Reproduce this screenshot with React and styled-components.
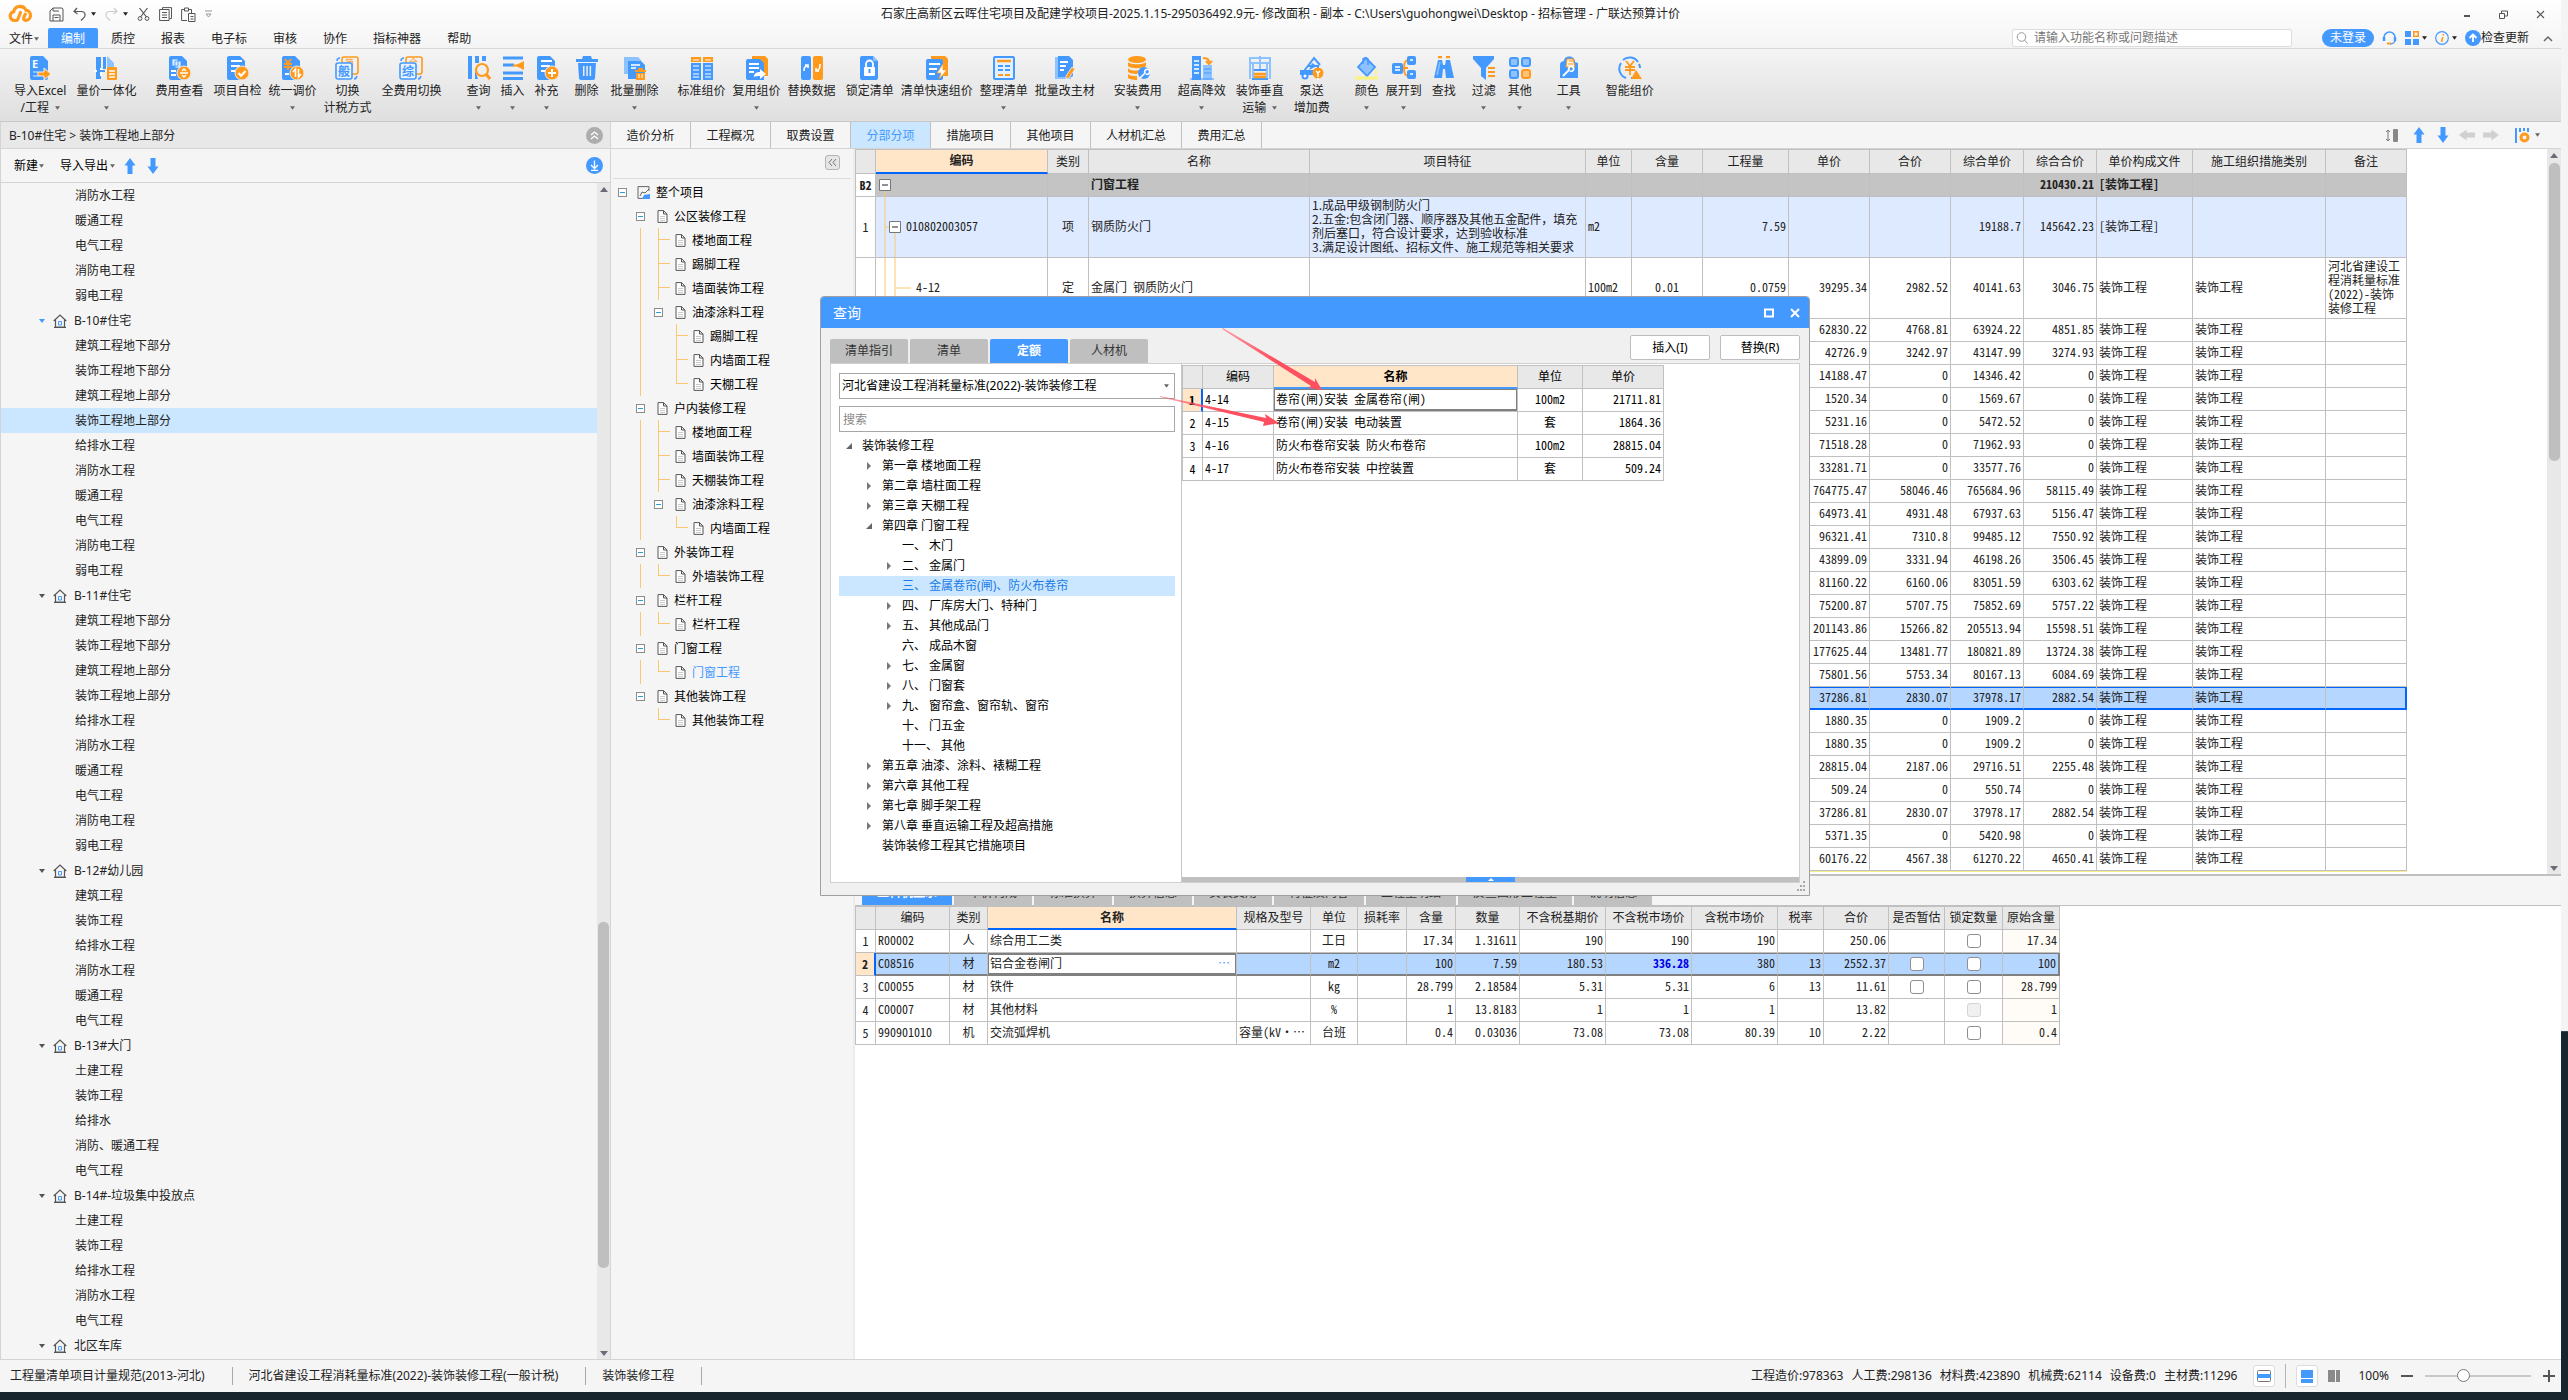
import React from "react";
import styled, { createGlobalStyle, css } from "styled-components";

const BLUE = "#4499ff";
const LIGHT = "#8cc2ff";
const ORANGE = "#ff9a1c";
const LINE = "#c0c0c0";

const GlobalStyle = createGlobalStyle`
  * {
    box-sizing: border-box;
  }
  body {
    margin: 0;
    background: #18252c;
    color: #222;
    font: 12px/16px "Noto Sans", "Noto Sans CJK SC", sans-serif;
  }
  button, input, select {
    font: inherit;
    color: inherit;
    margin: 0;
    padding: 0;
    border: 0;
    background: none;
  }
  svg {
    display: block;
    flex: none;
  }
`;

/* ---------- window frame ---------- */

const Desktop = styled.div`
  position: relative;
  display: grid;
  grid-template-columns: minmax(0, 1fr) 7px;
  height: 100vh;
  padding-bottom: 8px;
  overflow: hidden;
`;

const Strip = styled.div`
  height: 1032px;
  background: #f4f4f4;
  border-bottom: 1px solid #3b464c;
`;

const Window = styled.div`
  display: flex;
  flex-direction: column;
  min-height: 0;
  background: #f5f5f5;
`;

const Top = styled.header`
  background: linear-gradient(#ffffff, #f4f4f4);
  border-bottom: 1px solid #d8d8d8;
`;

const TitleBar = styled.div`
  display: grid;
  grid-template-columns: 1fr auto 1fr;
  align-items: center;
  height: 28px;
`;

const QuickTools = styled.div`
  display: flex;
  align-items: center;
  gap: 9px;
  padding-left: 8px;
`;

const IconButton = styled.button`
  display: flex;
  align-items: center;
  gap: ${(p) => p.$gap || 0}px;
  margin-left: ${(p) => p.$left || 0}px;
`;

const Title = styled.h1`
  margin: 0;
  font-size: 12px;
  font-weight: 400;
`;

const WindowButtons = styled.div`
  display: flex;
  justify-content: flex-end;
  align-items: center;
  gap: 28px;
  padding-right: 16px;
`;

const MenuBar = styled.nav`
  display: flex;
  align-items: center;
  height: 20px;
`;

const MenuItem = styled.button`
  display: flex;
  align-items: center;
  gap: 1px;
  height: 20px;
  padding: 2px ${(p) => (p.$first ? "9px" : "13px")} 0;
  ${(p) =>
    p.$active &&
    css`
      background: ${BLUE};
      color: white;
      border-radius: 2px 2px 0 0;
    `}
`;

const MenuRight = styled.div`
  display: flex;
  align-items: center;
  margin-left: auto;
  padding-right: 8px;
  gap: 8px;
`;

const SearchBox = styled.label`
  display: flex;
  align-items: center;
  gap: 6px;
  width: 280px;
  height: 18px;
  margin-right: 22px;
  padding-left: 3px;
  background: white;
  border: 1px solid #ddd;
  border-radius: 2px;
  input {
    flex: 1;
    outline: 0;
  }
  input::placeholder {
    color: #777;
    opacity: 1;
  }
`;

const LoginButton = styled.button`
  width: 52px;
  height: 18px;
  line-height: 18px;
  border-radius: 9px;
  background: ${BLUE};
  color: white;
`;

/* ---------- ribbon ---------- */

const Ribbon = styled.div`
  display: flex;
  align-items: flex-start;
  height: 73px;
  padding: 7px 14px 0;
  background: linear-gradient(#f4f4f4, #dfdfdf);
  border-bottom: 1px solid #c8c8c8;
`;

const RibbonButton = styled.button`
  display: flex;
  flex-direction: column;
  align-items: center;
  margin-left: ${(p) => p.$gap}px;
  line-height: 17px;
  white-space: nowrap;
  svg + span {
    margin-top: 2px;
  }
`;

const RibbonSub = styled.span`
  display: flex;
  align-items: center;
  gap: 6px;
  height: 17px;
`;

/* ---------- left panel ---------- */

const Work = styled.div`
  display: grid;
  grid-template-columns: 611px minmax(0, 1fr);
  flex: 1;
  min-height: 0;
`;

const Side = styled.aside`
  display: flex;
  flex-direction: column;
  min-height: 0;
  border: 1px solid #d4d4d4;
  border-width: 0 1px;
`;

const SideHeader = styled.div`
  display: flex;
  justify-content: space-between;
  align-items: center;
  height: 27px;
  padding: 1px 7px 0 8px;
  background: #e8e8e8;
  border-bottom: 1px solid #d4d4d4;
`;

const SideTools = styled.div`
  display: flex;
  align-items: center;
  gap: 7px;
  height: 34px;
  padding: 0 7px 0 13px;
  border-bottom: 1px solid #d4d4d4;
  color: #000;
  > :last-child {
    margin-left: auto;
  }
  > :nth-child(2) {
    margin-left: 9px;
  }
`;

const Scrolled = styled.div`
  display: flex;
  flex: 1;
  min-height: 0;
`;

const Tree = styled.ul`
  flex: 1;
  margin: 0;
  padding: 0;
  list-style: none;
`;

const ProjectRow = styled.li`
  display: flex;
  align-items: center;
  gap: 7px;
  height: 25px;
  padding-left: ${(p) => (p.$group ? 37 : 74)}px;
  background: ${(p) => (p.$active ? "#cbe7ff" : "none")};
`;

const ScrollTrack = styled.div`
  display: flex;
  flex-direction: column;
  justify-content: space-between;
  align-items: center;
  width: ${(p) => p.$width}px;
  padding: 4px 0 3px;
  background: #e8e8e8;
`;

const Thumb = styled.div`
  width: 11px;
  height: ${(p) => p.$height}px;
  margin-top: ${(p) => p.$top}px;
  margin-bottom: auto;
  border-radius: 5px;
  background: #bfbfbf;
`;

/* ---------- tabs and section tree ---------- */

const Main = styled.main`
  display: flex;
  flex-direction: column;
  min-width: 0;
  min-height: 0;
`;

const TabBar = styled.div`
  display: flex;
  height: 27px;
  border-bottom: 1px solid #d4d4d4;
`;

const Tab = styled.button`
  padding: 2px 15px 0;
  border-right: 1px solid ${LINE};
  min-width: 80px;
  ${(p) =>
    p.$active &&
    css`
      background: #cbe7ff;
      color: ${BLUE};
    `}
`;

const TabTools = styled.div`
  display: flex;
  align-items: center;
  gap: 8px;
  margin-left: auto;
  padding-right: 21px;
  > :first-child {
    margin-right: 4px;
  }
`;

const Body = styled.div`
  display: grid;
  grid-template-columns: 244px minmax(0, 1fr);
  flex: 1;
  min-height: 0;
`;

const Sections = styled.div`
  border-right: 2px solid #ececec;
`;

const SectionsHeader = styled.div`
  display: flex;
  justify-content: flex-end;
  align-items: center;
  height: 30px;
  margin: 0 2px 1px;
  padding: 0 11px 2px 0;
  border-bottom: 1px solid #dcdcdc;
`;

const CollapseButton = styled.button`
  width: 15px;
  height: 15px;
  border: 1px solid #b4b4b4;
  border-radius: 3px;
  background: #e6e6e6;
  display: grid;
  place-items: center;
`;

const SectionRow = styled.li`
  display: flex;
  align-items: center;
  height: 24px;
  padding-left: 2px;
  color: ${(p) => (p.$active ? BLUE : "#000")};
  svg + span {
    margin-left: 6px;
    padding-top: 2px;
  }
`;

const Guide = styled.i`
  position: relative;
  flex: none;
  width: 18px;
  height: 24px;
  &::before {
    content: "";
    display: ${(p) => (p.$kind === "none" ? "none" : "block")};
    width: 1px;
    height: ${(p) => (p.$kind === "end" ? 12 : 24)}px;
    margin-left: 9px;
    background: #fcc673;
  }
  &::after {
    content: "";
    display: ${(p) => (p.$kind === "tee" || p.$kind === "end" ? "block" : "none")};
    position: absolute;
    top: 11px;
    left: 9px;
    width: 12px;
    height: 1px;
    background: #fcc673;
  }
`;

const Toggle = styled.button`
  width: 9px;
  height: 9px;
  margin: 0 ${(p) => (p.$root ? 10 : 12)}px 0 5px;
  border: 1px solid #8c8c8c;
  background: white;
  display: grid;
  place-items: center;
  &::before {
    content: "";
    width: 5px;
    height: 1px;
    background: #2a9fd6;
  }
`;

const LeafGap = styled.i`
  width: 8px;
`;

/* ---------- tables ---------- */

const Panes = styled.div`
  display: flex;
  flex-direction: column;
  min-width: 0;
`;

const UpperPane = styled.section`
  display: flex;
  justify-content: space-between;
  background: white;
  border-bottom: 2px solid ${LINE};
`;

const LowerPane = styled.section`
  flex: 1;
  background: white;
`;

const Grid = styled.table`
  table-layout: fixed;
  width: 0;
  border-spacing: 0;
  border-top: 1px solid ${LINE};
  line-height: 14px;
  font-family: "Noto Sans CJK SC", sans-serif;
  font-feature-settings: "hwid";
`;

const HeadCell = styled.th`
  height: ${(p) => p.$height || 23}px;
  padding: 0 0 2px;
  font-weight: ${(p) => (p.$active ? 700 : 400)};
  background: ${(p) => (p.$active ? "#ffe6c9" : "#e8e8e8")};
  border-right: 1px solid ${LINE};
  border-bottom: 1px solid ${LINE};
  white-space: nowrap;
  ${(p) =>
    p.$active &&
    css`
      border-bottom: 2px solid ${p.$thin ? BLUE : "#0066ff"};
    `}
  &:first-child {
    border-left: 1px solid ${LINE};
  }
`;

const Row = styled.tr`
  height: ${(p) => p.$height || 23}px;
  background: ${(p) => p.$bg || "white"};
  font-weight: ${(p) => (p.$bold ? 700 : 400)};
  ${(p) =>
    p.$frame &&
    css`
      td {
        border-bottom: 2px solid ${p.$frame};
        box-shadow: inset 0 1px ${p.$frame};
      }
      td:last-child {
        border-right: 2px solid ${p.$frame};
      }
    `}
`;

const Cell = styled.td`
  height: 22px;
  padding: 0 2px 2px;
  overflow: hidden;
  text-align: ${(p) => p.$align || "left"};
  white-space: ${(p) => (p.$wrap ? "pre-wrap" : "pre")};
  border-right: 1px solid ${LINE};
  border-bottom: 1px solid ${LINE};
  ${(p) => p.$bg && `background: ${p.$bg};`}
  ${(p) => p.$strong && "color: #0000e6; font-weight: 700;"}
  ${(p) => p.$fullWidth && "font-feature-settings: normal;"}
  ${(p) => p.$flush && "padding-top: 0; padding-bottom: 0;"}
`;

const NumCell = styled.th`
  padding: 0;
  font-weight: ${(p) => (p.$bold ? 700 : 400)};
  background: ${(p) => (p.$active ? "#ffe6c9" : "white")};
  border: 1px solid ${LINE};
  border-top: 0;
  ${(p) => p.$active && "border-right: 2px solid #0066ff;"}
`;

const NextRow = styled.div`
  width: 1552px;
  height: 1px;
  background: #f6f08c;
`;

const Blank = styled.div`
  height: 2px;
`;

const CodeTree = styled.div`
  display: flex;
  align-items: center;
  height: ${(p) => p.$height}px;
  svg {
    margin-left: -2px;
  }
  span {
    padding-bottom: 2px;
  }
`;

const CheckBox = styled.input.attrs({ type: "checkbox" })`
  appearance: none;
  display: block;
  width: 14px;
  height: 14px;
  margin: 0 auto;
  background: white;
  border: 1px solid #909090;
  border-radius: 3px;
  &:disabled {
    background: #f0f0f0;
    border-color: #d4d4d4;
  }
`;

const EditCell = styled.div`
  display: flex;
  justify-content: space-between;
  align-items: center;
  height: 20px;
  margin: 1px -2px 0;
  padding: 0 5px 2px 1px;
  background: white;
  border: 1px solid #808080;
  span:last-child {
    color: ${BLUE};
  }
`;

const LowerTabs = styled.div`
  display: flex;
  gap: 2px;
  height: 30px;
  padding: 5px 0 0 7px;
  background: #f5f5f5;
  border-bottom: 1px solid ${LINE};
`;

const LowerTab = styled.button`
  height: 24px;
  padding: 0 15px;
  font-weight: ${(p) => (p.$active ? 700 : 400)};
  color: ${(p) => (p.$active ? "white" : "#333")};
  background: ${(p) => (p.$active ? BLUE : LINE)};
`;

/* ---------- status bar ---------- */

const StatusBar = styled.footer`
  display: flex;
  align-items: center;
  height: 33px;
  padding-left: 10px;
  padding-right: 6px;
  border-top: 1px solid #d4d4d4;
`;

const StatusText = styled.span`
  padding-right: 27px;
  margin-right: 16px;
  line-height: 18px;
  border-right: 1px solid #a8a8a8;
`;

const Totals = styled.div`
  display: flex;
  gap: 8px;
  margin-left: auto;
  margin-right: 16px;
`;

const ViewButton = styled.button`
  display: grid;
  place-items: center;
  width: 22px;
  height: 22px;
  border: 1px solid #ddd;
  border-radius: 3px;
  background: white;
`;

const Divider = styled.i`
  width: 1px;
  height: 24px;
  margin: 0 10px;
  background: #b4b4b4;
`;

const ZoomText = styled.output`
  margin: 0 12px 0 18px;
`;

const Slider = styled.input.attrs({ type: "range" })`
  appearance: none;
  width: 106px;
  height: 14px;
  margin: 0 12px;
  &::-webkit-slider-runnable-track {
    height: 2px;
    background: #c8c8c8;
  }
  &::-webkit-slider-thumb {
    appearance: none;
    width: 13px;
    height: 13px;
    margin-top: -6px;
    border: 1px solid #777;
    border-radius: 50%;
    background: white;
  }
`;

/* ---------- query dialog ---------- */

const Dialog = styled.section`
  position: absolute;
  left: 820px;
  top: 296px;
  width: 990px;
  height: 600px;
  display: flex;
  flex-direction: column;
  padding-bottom: 12px;
  background: #f0f0f0;
  border: 1px solid #a0a0a0;
  border-radius: 4px 4px 0 0;
  color: #000;
`;

const DialogTitle = styled.div`
  display: flex;
  align-items: center;
  justify-content: space-between;
  height: 31px;
  padding: 0 9px 0 12px;
  background: ${BLUE};
  border-radius: 3px 3px 0 0;
  color: white;
  font-size: 14px;
  > div {
    display: flex;
    gap: 16px;
  }
`;

const DialogBar = styled.div`
  display: flex;
  align-items: flex-end;
  gap: 2px;
  height: 35px;
  padding: 0 9px;
`;

const DialogTab = styled.button`
  width: 78px;
  height: 24px;
  border-radius: 2px 2px 0 0;
  color: ${(p) => (p.$active ? "white" : "#333")};
  font-weight: ${(p) => (p.$active ? 700 : 400)};
  background: ${(p) => (p.$active ? BLUE : "#bfbfbf")};
`;

const DialogButtons = styled.div`
  display: flex;
  gap: 10px;
  margin-left: auto;
  margin-bottom: 3px;
`;

const PushButton = styled.button`
  width: 80px;
  height: 25px;
  background: white;
  border: 1px solid #bdbdbd;
  border-radius: 2px;
`;

const DialogBody = styled.div`
  display: grid;
  grid-template-columns: 351px minmax(0, 1fr);
  flex: 1;
  margin: 0 9px;
  background: white;
  border: 1px solid #d0d0d0;
`;

const Picker = styled.div`
  padding: 9px 6px 0 8px;
  border-right: 1px solid #c8c8c8;
`;

const SelectWrap = styled.div`
  display: flex;
  align-items: center;
  height: 26px;
  margin-bottom: 7px;
  padding-right: 5px;
  border: 1px solid #a6a6a6;
  select {
    flex: 1;
    height: 24px;
    appearance: none;
    padding-left: 2px;
    outline: 0;
  }
`;

const PickerSearch = styled.input`
  display: block;
  width: 100%;
  height: 26px;
  margin-bottom: 4px;
  padding-left: 3px;
  border: 1px solid #a6a6a6;
  &::placeholder {
    color: #888;
    opacity: 1;
  }
`;

const ChapterRow = styled.li`
  display: flex;
  align-items: center;
  height: 20px;
  padding-left: ${(p) => 7 + p.$level * 20}px;
  white-space: pre;
  color: ${(p) => (p.$active ? "#1a7be8" : "#000")};
  background: ${(p) => (p.$active ? "#cbe7ff" : "none")};
  svg {
    margin-right: 10px;
  }
`;

const Results = styled.div`
  display: flex;
  flex-direction: column;
  justify-content: space-between;
  padding-top: 1px;
`;

const Splitter = styled.div`
  display: grid;
  place-items: center;
  height: 5px;
  background: #c0c0c0;
  button {
    display: grid;
    place-items: center;
    width: 49px;
    height: 5px;
    background: ${BLUE};
  }
`;

const PickedCell = styled.div`
  height: 22px;
  margin: 0 -2px;
  padding: 2px 1px 0;
  border: 1px solid #808080;
  border-bottom-width: 2px;
`;

const Arrows = styled.svg`
  position: absolute;
  left: 0;
  top: 0;
`;

const Grip = styled.svg`
  position: absolute;
  right: 3px;
  bottom: 4px;
`;

/* ---------- icons ---------- */

const Svg = ({ w = 24, h = w, box, children }) => (
  <svg width={w} height={h} viewBox={box || `0 0 ${w} ${h}`} fill="none">
    {children}
  </svg>
);

const Caret = ({ color = "#666", w = 6 }) => (
  <Svg w={w} h={4} box="0 0 6 4">
    <path d="M0 0h6L3 4z" fill={color} />
  </Svg>
);

const Arrow = ({ color = BLUE, turn = 0 }) => (
  <Svg w={16} h={16}>
    <path
      d="M8 0l5.500 7.500H10.500V16h-5V7.500H2.500z"
      fill={color}
      transform={`rotate(${turn} 8 8)`}
    />
  </Svg>
);

const Logo = () => (
  <Svg w={24} h={20}>
    <path
      d="M8 16.500H6.500a4.500 4.500 0 0 1-.8-8.900A6.500 6.500 0 0 1 18 6.200a5.200 5.200 0 0 1 0 10.300c-2 0-2.800-1.500-2-3.300l1.300-3"
      stroke={ORANGE}
      strokeWidth="3.200"
      strokeLinecap="round"
    />
    <path d="M12.500 8.500L9.500 16" stroke={ORANGE} strokeWidth="3.200" strokeLinecap="round" />
  </Svg>
);

const HouseIcon = () => (
  <Svg w={14} h={14}>
    <path d="M.7 7L7 1l6.300 6M2.500 6v7h9V6M1 13.400h12" stroke="#555" strokeWidth="1.200" />
    <path d="M5.500 7.500h3V11h-3z" stroke={BLUE} />
  </Svg>
);

const PageIcon = () => (
  <Svg w={11} h={13}>
    <path d="M1 .6h5.500L10 4v8.400H1zM6.500.6V4H10" fill="white" stroke="#555" />
    <path d="M3 6.500h5M3 8.500h5M3 10.500h5" stroke="#bbb" strokeWidth=".8" />
  </Svg>
);

const RootIcon = () => (
  <Svg w={13} h={13}>
    <path d="M12 5V.6H1v11.800h5M3 10l2-4 3 1 4-4" stroke="#666" />
    <path d="M5 13l2-4 6-1v5z" fill={BLUE} />
  </Svg>
);

const Sheet = ({ fill = BLUE, x = 2 }) => (
  <path d={`M${x} 2a2 2 0 0 1 2-2h11l5 5v17a2 2 0 0 1-2 2H${x + 2}a2 2 0 0 1-2-2z`} fill={fill} />
);

const SheetLines = ({ color = "white", d = "M6 5h11M6 10h9M6 15h5" }) => (
  <path d={d} stroke={color} strokeWidth="2" />
);

const Badge = ({ children }) => (
  <>
    <circle cx="17" cy="17" r="7" fill={ORANGE} stroke="#ececec" />
    {children}
  </>
);

const SwapIcon = ({ front, back }) => (
  <>
    <rect x="7" y="1" width="16" height="17" rx="2" stroke={ORANGE} strokeWidth="1.600" />
    <text x="10" y="10" fontSize="9" fill={ORANGE}>
      {back}
    </text>
    <rect x="1" y="7" width="16" height="16" rx="2" fill="#eaf3ff" stroke={BLUE} strokeWidth="1.600" />
    <text x="3" y="19.500" fontSize="12" fontWeight="700" fill={BLUE}>
      {front}
    </text>
    <path d="M2 5c0-2 1-3 3-3M22 20c-.5 2-1.500 3-3 3" stroke={BLUE} strokeWidth="1.500" />
  </>
);

const ribbonIcons = {
  excel: (
    <>
      <Sheet />
      <text x="4" y="12" fontSize="11" fontWeight="700" fill="white">
        E
      </text>
      <path d="M5 16h5M5 20h5" stroke={LIGHT} strokeWidth="2" />
      <path d="M10 16h6v-4l7 6-7 6v-4h-6z" fill={ORANGE} stroke="#efefef" />
    </>
  ),
  unify: (
    <>
      <path d="M2 1h5v22H2zM9 1h3v12H9z" fill={BLUE} />
      <path d="M13 0l7 7v4h-7z" fill={LIGHT} />
      <path d="M0 15h14M7 12v8" stroke="white" strokeWidth="2" />
      <path d="M3 15h8" stroke={BLUE} strokeWidth="2" />
      <rect x="13" y="11" width="10" height="13" rx="1" fill={ORANGE} />
      <path d="M15 15h6M15 18h6M15 21h6" stroke="white" strokeWidth="1.400" />
    </>
  ),
  cost: (
    <>
      <Sheet />
      <path d="M5 3h6v7H5zM8 5h6v7H8z" fill="#dcecff" stroke={BLUE} strokeWidth=".8" />
      <SheetLines d="M4 15h5M4 19h5" />
      <Badge>
        <path d="M13 17h8M17 12.500v1.500M17 20v1.500M15 15l2-2 2 2M15 19l2 2 2-2" stroke="white" strokeWidth="1.400" />
      </Badge>
    </>
  ),
  check: (
    <>
      <Sheet />
      <SheetLines />
      <Badge>
        <path d="M13.500 17l2.500 3 4.500-5" stroke="white" strokeWidth="2" />
      </Badge>
    </>
  ),
  adjust: (
    <>
      <Sheet />
      <path d="M5 3l3 4 3-4M4 8h8M4 11h8M8 7v7" stroke={ORANGE} strokeWidth="2" />
      <path d="M5 18h4" stroke="white" strokeWidth="2" />
      <Badge>
        <path d="M15.500 21v-8l-2.500 3M18.500 13v8l2.500-3" stroke="white" strokeWidth="1.600" />
      </Badge>
    </>
  ),
  tax: <SwapIcon front="般" back="简" />,
  full: <SwapIcon front="综" back="全" />,
  query: (
    <>
      <path d="M1 0h4v23H1zM8 0h4v7H8zM15 0h4v5h-4zM8 14l3 9H8z" fill={BLUE} />
      <circle cx="15" cy="14" r="6" stroke={ORANGE} strokeWidth="2.200" />
      <path d="M19 18l4 5" stroke={ORANGE} strokeWidth="3" />
    </>
  ),
  insert: (
    <>
      <path d="M2 2h20M2 17h20M2 22.500h20" stroke={BLUE} strokeWidth="3" />
      <path d="M2 9h11" stroke={BLUE} strokeWidth="3" />
      <path d="M23 5v9l-9-4.500z" fill={ORANGE} />
      <path d="M12 9.500h5" stroke={ORANGE} strokeWidth="2" />
    </>
  ),
  supply: (
    <>
      <Sheet />
      <SheetLines />
      <Badge>
        <path d="M13 17h8M17 13v8" stroke="white" strokeWidth="2" />
      </Badge>
    </>
  ),
  remove: (
    <path
      d="M1 3h6l1-3h8l1 3h6v3H1zM3 7h18l-1 15a2 2 0 0 1-2 2H6a2 2 0 0 1-2-2zM8 10v10h1.500V10zM11.300 10v10h1.500V10zM14.600 10v10h1.500V10z"
      fill={BLUE}
      fillRule="evenodd"
    />
  ),
  batchRemove: (
    <>
      <path d="M1 1h14l3 3v14H1z" fill={LIGHT} />
      <path d="M5 5h13l4 4v14H5z" fill={BLUE} />
      <path d="M8 9h9M8 12h5" stroke="white" strokeWidth="1.500" />
      <path d="M12 14h11v2H12zM13 17h9v7h-9zM15 12h5v2h-5z" fill={ORANGE} />
      <path d="M16 18v4M19 18v4" stroke="white" />
    </>
  ),
  standard: (
    <>
      <path d="M1 1h10v5H1zM13 1h10v5H13z" fill={ORANGE} />
      <path d="M1 7h10v17H1zM13 7h10v17H13z" fill={BLUE} />
      <path d="M3 4h6M15 4h6M3 10h6M15 10h6M3 14h6M15 14h6M3 18h6M15 18h6M3 21h6M15 21h6" stroke="white" />
    </>
  ),
  reuse: (
    <>
      <path d="M7 0h13l3 3v17H7z" fill={ORANGE} />
      <path d="M1 5a2 2 0 0 1 2-2h12l4 4v17H3a2 2 0 0 1-2-2z" fill={BLUE} />
      <SheetLines d="M4 8h10M4 12h10M4 16h5" />
      <path d="M9 21c0-4 3-5 6-5v-3l6 5-6 5v-3c-3 0-4 0-6 1z" fill="white" />
    </>
  ),
  replace: (
    <>
      <rect x="1" width="10" height="24" rx="2" fill={BLUE} />
      <rect x="13" width="10" height="24" rx="2" fill={ORANGE} />
      <path d="M4 15c0-3 0-4 4-6M5 9h3v3M20 8c0 4 0 5-4 7M19 15h-3v-3" stroke="white" strokeWidth="1.600" />
    </>
  ),
  lock: (
    <>
      <Sheet />
      <path d="M15 0l5 5h-5z" fill={LIGHT} />
      <path d="M8 11V8a3 3 0 0 1 7 0v3" stroke="white" strokeWidth="1.800" />
      <rect x="6" y="11" width="11" height="9" rx="1" fill="white" />
      <path d="M11.500 13v4" stroke={BLUE} strokeWidth="2" />
    </>
  ),
  quick: (
    <>
      <path d="M6 0h14l3 3v17H6z" fill={ORANGE} />
      <rect x="1" y="3" width="17" height="21" rx="2" fill={BLUE} />
      <SheetLines d="M4 8h11M4 13h8M4 18h6" />
      <path d="M18 8l-6 9h4l-2 6 8-9h-4z" fill="white" stroke={ORANGE} strokeWidth=".8" />
    </>
  ),
  arrange: (
    <>
      <rect x="2" y="1" width="20" height="22" rx="1" fill="#e3f0ff" stroke={BLUE} strokeWidth="2" />
      <path d="M5 5h14" stroke={ORANGE} strokeWidth="2.500" />
      <path d="M6 10h5M13 10h5M6 14h5M13 14h5" stroke={BLUE} strokeWidth="2" />
      <path d="M6 19h5M13 19h5" stroke={ORANGE} strokeWidth="2" />
    </>
  ),
  material: (
    <>
      <path d="M2 1h13l3 3v19H2z" fill={LIGHT} />
      <path d="M5 0h11l4 4v15a2 2 0 0 1-2 2H5z" fill={BLUE} />
      <SheetLines d="M7 6h8M7 10h6M7 14h4" />
      <path d="M13 20l6-9 3 2-6 9-3 1z" fill={ORANGE} stroke="#eee" strokeWidth=".8" />
    </>
  ),
  install: (
    <>
      <ellipse cx="11" cy="3.500" rx="9" ry="3.500" fill={ORANGE} />
      <path d="M2 6c2 3 16 3 18 0v4c-2 3-16 3-18 0zM2 12c2 3 8 3 12 2l-3 4c-4 0-8-1-9-2zM2 18c2 2 5 2 9 2v4c-4 0-8-1-9-2z" fill={ORANGE} />
      <circle cx="18" cy="17" r="6" fill={BLUE} />
      <path d="M14 22l5-5a2.500 2.500 0 1 1 1 1" stroke="white" strokeWidth="1.600" />
    </>
  ),
  high: (
    <>
      <path d="M2 0h9v24H2z" fill={BLUE} />
      <path d="M4 5h5M4 9h5M4 13h5M4 17h5" stroke="white" strokeWidth="1.600" />
      <path d="M13 9h9v15h-9z" fill={LIGHT} />
      <path d="M14 13h7M14 17h7M0 23h24" stroke={BLUE} />
      <path d="M13 2c4 0 6 1 6 4M16 5l3 3 3-3" stroke={ORANGE} strokeWidth="2" />
    </>
  ),
  vertical: (
    <>
      <path d="M2 2h20v5H2zM2 7v16M22 7v16M5 7v16M19 7v16M12 0v14" stroke={LIGHT} strokeWidth="2" />
      <path d="M6 14h12M4 23h16" stroke={BLUE} strokeWidth="2" />
      <path d="M6 18h12M6 21h12" stroke={ORANGE} strokeWidth="2.500" />
    </>
  ),
  pump: (
    <>
      <path d="M4 15L14 2l6 7M8 10h10v6" stroke={BLUE} strokeWidth="2" />
      <path d="M0 14h16v5H0zM12 7l5 3-8 4z" fill={BLUE} />
      <circle cx="5" cy="20" r="2.500" fill="white" stroke={BLUE} strokeWidth="2" />
      <circle cx="18" cy="17" r="5.500" fill={ORANGE} />
      <path d="M16 15l2 2 2-2M18 17v4M18 22v2" stroke="white" strokeWidth="1.500" />
    </>
  ),
  color: (
    <>
      <path d="M3 11l8-9 9 9-8 9z" fill={LIGHT} stroke={BLUE} strokeWidth="1.800" />
      <path d="M8 8V3a3 3 0 0 1 5 0v6" stroke={BLUE} strokeWidth="1.500" />
      <path d="M20 12c4 5 2 6 0 6z" fill="#fbf37b" />
      <path d="M0 22h23" stroke="#fbf37b" strokeWidth="3" />
    </>
  ),
  expand: (
    <>
      <path d="M10 12h6M12 12c0-8 3-8 5-8M12 12c0 8 3 8 5 8" stroke={ORANGE} strokeWidth="2" />
      <rect x="0" y="7" width="11" height="11" rx="2" fill={BLUE} />
      <rect x="15" y="0" width="9" height="9" rx="2" fill={BLUE} />
      <rect x="15" y="14" width="9" height="9" rx="2" fill={BLUE} />
      <path d="M3 11h5M3 14h5M18 4h3M18 18h3" stroke="white" strokeWidth="1.500" />
    </>
  ),
  find: (
    <>
      <path d="M6 1h4M14 1h4" stroke={ORANGE} strokeWidth="2.500" />
      <path d="M6 4h4l1 5h2l1-5h4l4 18h-8l-1-9h-2l-1 9H2z" fill={BLUE} />
      <path d="M8 6L5 19" stroke={LIGHT} strokeWidth="1.500" />
    </>
  ),
  filter: (
    <>
      <path d="M1 0h21v3l-8 9v12l-5-4v-8L1 3z" fill={BLUE} />
      <path d="M16 12h7M16 16h7M16 20h7" stroke={ORANGE} strokeWidth="2" />
    </>
  ),
  other: (
    <>
      <rect x="2" y="2" width="8" height="8" rx="2" fill={LIGHT} stroke={BLUE} strokeWidth="2" />
      <rect x="14" y="2" width="8" height="8" rx="2" fill={LIGHT} stroke={BLUE} strokeWidth="2" />
      <rect x="2" y="14" width="8" height="8" rx="2" fill={LIGHT} stroke={BLUE} strokeWidth="2" />
      <rect x="14" y="14" width="8" height="8" rx="2" fill="#ffc27a" stroke={ORANGE} strokeWidth="2" />
    </>
  ),
  tools: (
    <>
      <path d="M3 22V9c0-3 2-4 4-4 0-6 11-6 11 1l3 1v15z" fill={BLUE} />
      <path d="M10 3h6l2 8H9z" fill="#fff1dd" stroke={ORANGE} />
      <path d="M12 5h4M11 8h5" stroke={ORANGE} />
      <path d="M6 20l6-6a2.500 2.500 0 1 1 1 1" stroke="white" strokeWidth="1.800" />
    </>
  ),
  smart: (
    <>
      <path d="M20 6A10 10 0 0 0 5 4M3 7a10 10 0 0 0 5 15M13 22h2" stroke={BLUE} strokeWidth="2" />
      <path d="M21 8a10 10 0 0 1 1 4" stroke={BLUE} strokeWidth="2" />
      <path d="M8 5l4 5 4-5M7 11h10M7 14h10M12 10v9" stroke={ORANGE} strokeWidth="1.800" />
      <path d="M18 14l6 9H13z" fill={ORANGE} />
    </>
  ),
};

/* ---------- data ---------- */

const menus = ["编制", "质控", "报表", "电子标", "审核", "协作", "指标神器", "帮助"];

// icon, label, gap before, second line, has caret
const ribbon = [
  ["excel", "导入Excel", 0, "/工程", true],
  ["unify", "量价一体化", 10, "", true],
  ["cost", "费用查看", 19],
  ["check", "项目自检", 10],
  ["adjust", "统一调价", 7, "", true],
  ["tax", "切换", 7, "计税方式"],
  ["full", "全费用切换", 10],
  ["query", "查询", 25, "", true],
  ["insert", "插入", 10, "", true],
  ["supply", "补充", 10, "", true],
  ["remove", "删除", 16],
  ["batchRemove", "批量删除", 12, "", true],
  ["standard", "标准组价", 19],
  ["reuse", "复用组价", 7, "", true],
  ["replace", "替换数据", 7],
  ["lock", "锁定清单", 10],
  ["quick", "清单快速组价", 7],
  ["arrange", "整理清单", 7, "", true],
  ["material", "批量改主材", 7],
  ["install", "安装费用", 19, "", true],
  ["high", "超高降效", 16, "", true],
  ["vertical", "装饰垂直", 10, "运输", true],
  ["pump", "泵送", 10, "增加费"],
  ["color", "颜色", 25, "", true],
  ["expand", "展开到", 7, "", true],
  ["find", "查找", 10],
  ["filter", "过滤", 16, "", true],
  ["other", "其他", 12, "", true],
  ["tools", "工具", 25, "", true],
  ["smart", "智能组价", 25],
];

const building = ["建筑工程地下部分", "装饰工程地下部分", "建筑工程地上部分", "装饰工程地上部分"];
const pipes = ["给排水工程", "消防水工程", "暖通工程", "电气工程", "消防电工程", "弱电工程"];

const projects = [
  { items: pipes.slice(1) },
  { name: "B-10#住宅", current: true, items: [...building, ...pipes] },
  { name: "B-11#住宅", items: [...building, ...pipes] },
  {
    name: "B-12#幼儿园",
    items: ["建筑工程", "装饰工程", "给排水工程", "消防水工程", "暖通工程", "电气工程"],
  },
  {
    name: "B-13#大门",
    items: ["土建工程", "装饰工程", "给排水", "消防、暖通工程", "电气工程"],
  },
  {
    name: "B-14#-垃圾集中投放点",
    items: ["土建工程", "装饰工程", "给排水工程", "消防水工程", "电气工程"],
  },
  { name: "北区车库", items: [] },
];

const tabs = [
  "造价分析",
  "工程概况",
  "取费设置",
  "分部分项",
  "措施项目",
  "其他项目",
  "人材机汇总",
  "费用汇总",
];

const sections = [
  {
    name: "公区装修工程",
    items: [
      { name: "楼地面工程" },
      { name: "踢脚工程" },
      { name: "墙面装饰工程" },
      {
        name: "油漆涂料工程",
        items: [{ name: "踢脚工程" }, { name: "内墙面工程" }, { name: "天棚工程" }],
      },
    ],
  },
  {
    name: "户内装修工程",
    items: [
      { name: "楼地面工程" },
      { name: "墙面装饰工程" },
      { name: "天棚装饰工程" },
      { name: "油漆涂料工程", items: [{ name: "内墙面工程" }] },
    ],
  },
  { name: "外装饰工程", items: [{ name: "外墙装饰工程" }] },
  { name: "栏杆工程", items: [{ name: "栏杆工程" }] },
  { name: "门窗工程", items: [{ name: "门窗工程", active: true }] },
  { name: "其他装饰工程", items: [{ name: "其他装饰工程" }] },
];

const mainCols = [21, 172, 41, 221, 276, 46, 71, 86, 81, 81, 73, 73, 96, 133, 81];
const mainHeads = [
  "",
  "编码",
  "类别",
  "名称",
  "项目特征",
  "单位",
  "含量",
  "工程量",
  "单价",
  "合价",
  "综合单价",
  "综合合价",
  "单价构成文件",
  "施工组织措施类别",
  "备注",
];

const feature = `1.成品甲级钢制防火门
2.五金:包含闭门器、顺序器及其他五金配件，填充
剂后塞口，符合设计要求，达到验收标准
3.满足设计图纸、招标文件、施工规范等相关要求`;

const prices = [
  ["62830.22", "4768.81", "63924.22", "4851.85"],
  ["42726.9", "3242.97", "43147.99", "3274.93"],
  ["14188.47", "0", "14346.42", "0"],
  ["1520.34", "0", "1569.67", "0"],
  ["5231.16", "0", "5472.52", "0"],
  ["71518.28", "0", "71962.93", "0"],
  ["33281.71", "0", "33577.76", "0"],
  ["764775.47", "58046.46", "765684.96", "58115.49"],
  ["64973.41", "4931.48", "67937.63", "5156.47"],
  ["96321.41", "7310.8", "99485.12", "7550.92"],
  ["43899.09", "3331.94", "46198.26", "3506.45"],
  ["81160.22", "6160.06", "83051.59", "6303.62"],
  ["75200.87", "5707.75", "75852.69", "5757.22"],
  ["201143.86", "15266.82", "205513.94", "15598.51"],
  ["177625.44", "13481.77", "180821.89", "13724.38"],
  ["75801.56", "5753.34", "80167.13", "6084.69"],
  ["37286.81", "2830.07", "37978.17", "2882.54"],
  ["1880.35", "0", "1909.2", "0"],
  ["1880.35", "0", "1909.2", "0"],
  ["28815.04", "2187.06", "29716.51", "2255.48"],
  ["509.24", "0", "550.74", "0"],
  ["37286.81", "2830.07", "37978.17", "2882.54"],
  ["5371.35", "0", "5420.98", "0"],
  ["60176.22", "4567.38", "61270.22", "4650.41"],
];

const lowerTabs = [
  "工料机显示",
  "单价构成",
  "标准换算",
  "换算信息",
  "安装费用",
  "特征及内容",
  "工程量明细",
  "反查图形工程量",
  "说明信息",
];

const lowerCols = [21, 74, 38, 249, 74, 47, 49, 49, 64, 86, 86, 86, 46, 65, 56, 58, 57];
const lowerHeads = [
  "",
  "编码",
  "类别",
  "名称",
  "规格及型号",
  "单位",
  "损耗率",
  "含量",
  "数量",
  "不含税基期价",
  "不含税市场价",
  "含税市场价",
  "税率",
  "合价",
  "是否暂估",
  "锁定数量",
  "原始含量",
];

// flags: on = tick box, off = disabled tick box
const resources = [
  ["R00002", "人", "综合用工二类", "", "工日", "17.34", "1.31611", "190", "190", "190", "", "250.06", "", "on", "17.34"],
  ["C08516", "材", "铝合金卷闸门", "", "m2", "100", "7.59", "180.53", "336.28", "380", "13", "2552.37", "on", "on", "100"],
  ["C00055", "材", "铁件", "", "kg", "28.799", "2.18584", "5.31", "5.31", "6", "13", "11.61", "on", "on", "28.799"],
  ["C00007", "材", "其他材料", "", "%", "1", "13.8183", "1", "1", "1", "", "13.82", "", "off", "1"],
  ["990901010", "机", "交流弧焊机", "容量(kV·⋯", "台班", "0.4", "0.03036", "73.08", "73.08", "80.39", "10", "2.22", "", "on", "0.4"],
];

// level, text, state of the arrow
const chapters = [
  [0, "装饰装修工程", "open"],
  [1, "第一章 楼地面工程", "closed"],
  [1, "第二章 墙柱面工程", "closed"],
  [1, "第三章 天棚工程", "closed"],
  [1, "第四章 门窗工程", "open"],
  [2, "一、 木门"],
  [2, "二、 金属门", "closed"],
  [2, "三、 金属卷帘(闸)、防火布卷帘"],
  [2, "四、 厂库房大门、特种门", "closed"],
  [2, "五、 其他成品门", "closed"],
  [2, "六、 成品木窗"],
  [2, "七、 金属窗", "closed"],
  [2, "八、 门窗套", "closed"],
  [2, "九、 窗帘盒、窗帘轨、窗帘", "closed"],
  [2, "十、 门五金"],
  [2, "十一、 其他"],
  [1, "第五章 油漆、涂料、裱糊工程", "closed"],
  [1, "第六章 其他工程", "closed"],
  [1, "第七章 脚手架工程", "closed"],
  [1, "第八章 垂直运输工程及超高措施", "closed"],
  [1, "装饰装修工程其它措施项目"],
];

const quotaCols = [21, 71, 244, 65, 81];
const quotas = [
  ["4-14", "卷帘(闸)安装 金属卷帘(闸)", "100m2", "21711.81"],
  ["4-15", "卷帘(闸)安装 电动装置", "套", "1864.36"],
  ["4-16", "防火布卷帘安装 防火布卷帘", "100m2", "28815.04"],
  ["4-17", "防火布卷帘安装 中控装置", "套", "509.24"],
];

const Cols = ({ widths }) => (
  <colgroup>
    {widths.map((w, i) => (
      <col key={i} style={{ width: w }} />
    ))}
  </colgroup>
);

/* ---------- parts ---------- */

function Header() {
  return (
    <Top>
      <TitleBar>
        <QuickTools>
          <Logo />
          <IconButton aria-label="保存" $left={8}>
            <Svg w={15} h={15}>
              <path d="M1 4l3-3h9l1 1v12H1zM4 1v3h6M4 14V8h7v6M5.500 10.500h4" stroke="#555" />
            </Svg>
          </IconButton>
          <IconButton aria-label="撤销" $gap={5}>
            <Svg w={13} h={14}>
              <path d="M4 1L1 4.500 4.500 7M1 4.500h7c5 0 5 5 2 7l-2 2" stroke="#555" strokeWidth="1.200" />
            </Svg>
            <Caret color="#222" w={5} />
          </IconButton>
          <IconButton aria-label="恢复" $gap={5}>
            <Svg w={13} h={14}>
              <path d="M9 1l3 3.500L8.500 7M12 4.500H5c-5 0-5 5-2 7l2 2" stroke="#ccc" strokeWidth="1.200" />
            </Svg>
            <Caret color="#222" w={5} />
          </IconButton>
          <IconButton aria-label="剪切">
            <Svg w={13} h={14}>
              <path d="M2.500 1l7 9M10.500 1l-7 9" stroke="#555" strokeWidth="1.200" />
              <circle cx="3" cy="11.500" r="1.900" stroke="#555" />
              <circle cx="10" cy="11.500" r="1.900" stroke="#555" />
            </Svg>
          </IconButton>
          <IconButton aria-label="复制">
            <Svg w={13} h={14}>
              <path d="M3.500 2.500V.6h9v10.900h-2M.6 2.500h9.500v11H.6zM3 5.500h5M3 8h5M3 10.500h5" stroke="#555" />
            </Svg>
          </IconButton>
          <IconButton aria-label="粘贴">
            <Svg w={15} h={15}>
              <path d="M6 13.500H.6V2.500H3M8 2.500h2.500V6M3.500 1h4v3h-4zM7.500 6.500h6.500v8H7.500zM9.500 9.500h3M9.500 12h3" stroke="#555" />
            </Svg>
          </IconButton>
          <Svg w={7} h={8}>
            <path d="M0 1h7M1 4l2.500 3L6 4z" stroke="#999" />
          </Svg>
        </QuickTools>
        <Title>
          石家庄高新区云晖住宅项目及配建学校项目-2025.1.15-295036492.9元- 修改面积 - 副本 -
          C:\Users\guohongwei\Desktop - 招标管理 - 广联达预算计价
        </Title>
        <WindowButtons>
          <IconButton aria-label="最小化">
            <Svg w={8} h={8}>
              <path d="M1 6h6" stroke="#555" strokeWidth="2" />
            </Svg>
          </IconButton>
          <IconButton aria-label="还原">
            <Svg w={9} h={9}>
              <path d="M.5 3.500h5v5h-5zM2.500 3V1h6v5H6" stroke="#555" />
            </Svg>
          </IconButton>
          <IconButton aria-label="关闭">
            <Svg w={9} h={9}>
              <path d="M1 1l7 7M8 1L1 8" stroke="#555" strokeWidth="1.200" />
            </Svg>
          </IconButton>
        </WindowButtons>
      </TitleBar>
      <MenuBar>
        <MenuItem $first>
          文件
          <Caret w={5} />
        </MenuItem>
        {menus.map((m, i) => (
          <MenuItem key={m} $active={i === 0}>
            {m}
          </MenuItem>
        ))}
        <MenuRight>
          <SearchBox>
            <Svg w={12} h={12}>
              <circle cx="5.500" cy="5" r="4.300" stroke="#999" />
              <path d="M8.500 8l3 3.500" stroke="#999" />
            </Svg>
            <input aria-label="搜索功能" placeholder="请输入功能名称或问题描述" />
          </SearchBox>
          <LoginButton>未登录</LoginButton>
          <IconButton aria-label="客服">
            <Svg w={15} h={14}>
              <path d="M2 9V6.500a5.500 5.500 0 0 1 11 0V9c0 2-2 4-5 4" stroke={BLUE} strokeWidth="1.500" />
              <path d="M2 6v4M13 6v4" stroke={BLUE} strokeWidth="2.500" />
              <path d="M5 12.500h4" stroke={ORANGE} strokeWidth="2" />
            </Svg>
          </IconButton>
          <IconButton aria-label="应用" $gap={3}>
            <Svg w={14} h={14}>
              <path d="M0 0h6v6H0zM0 8h6v6H0zM8 8h6v6H8z" fill={BLUE} />
              <path d="M8.800.8h4.400v4.400H8.800z" stroke={ORANGE} strokeWidth="1.600" />
            </Svg>
            <Caret color="#222" w={5} />
          </IconButton>
          <IconButton aria-label="信息" $gap={3}>
            <Svg w={14} h={14}>
              <circle cx="7" cy="7" r="6.300" stroke={BLUE} strokeWidth="1.200" />
              <path d="M8.500 3l-.3 1.500M7.800 6l-1.300 5" stroke={ORANGE} strokeWidth="1.600" />
            </Svg>
            <Caret color="#222" w={5} />
          </IconButton>
          <IconButton>
            <Svg w={16} h={16}>
              <circle cx="8" cy="8" r="8" fill={BLUE} />
              <path d="M8 12V4.500M4.500 8L8 4.500 11.500 8" stroke="white" strokeWidth="1.800" />
            </Svg>
            检查更新
          </IconButton>
          <IconButton aria-label="收起" $left={6}>
            <Svg w={10} h={7}>
              <path d="M1 6l4-4 4 4" stroke="#666" strokeWidth="1.500" />
            </Svg>
          </IconButton>
        </MenuRight>
      </MenuBar>
    </Top>
  );
}

function ProjectTree() {
  return (
    <Side>
      <SideHeader>
        <span>B-10#住宅 &gt; 装饰工程地上部分</span>
        <IconButton aria-label="折叠">
          <Svg w={17} h={17}>
            <circle cx="8.500" cy="8.500" r="8.500" fill="#adadad" />
            <path d="M5 8l3.500-3L12 8M5 12l3.500-3 3.500 3" stroke="white" strokeWidth="1.300" />
          </Svg>
        </IconButton>
      </SideHeader>
      <SideTools>
        <IconButton $gap={1}>
          新建
          <Caret w={5} />
        </IconButton>
        <IconButton $gap={2}>
          导入导出
          <Caret w={5} />
        </IconButton>
        <IconButton aria-label="上移">
          <Arrow />
        </IconButton>
        <IconButton aria-label="下移">
          <Arrow turn={180} />
        </IconButton>
        <IconButton aria-label="定位">
          <Svg w={17} h={17}>
            <circle cx="8.500" cy="8.500" r="8.500" fill={BLUE} />
            <path d="M8.500 3.500V11M5 8l3.500 3.500L12 8M5 13.300h7" stroke="white" strokeWidth="1.300" />
          </Svg>
        </IconButton>
      </SideTools>
      <Scrolled>
        <Tree>
          {projects.map((p, i) => (
            <React.Fragment key={i}>
              {p.name && (
                <ProjectRow $group>
                  <Caret color={p.current ? BLUE : "#555"} w={8} />
                  <HouseIcon />
                  {p.name}
                </ProjectRow>
              )}
              {p.items.map((name) => (
                <ProjectRow key={name} $active={p.current && name === building[3]}>
                  {name}
                </ProjectRow>
              ))}
            </React.Fragment>
          ))}
        </Tree>
        <ScrollTrack $width={13}>
          <Svg w={8} h={5}>
            <path d="M0 5h8L4 0z" fill="#6b6b78" />
          </Svg>
          <Thumb $top={730} $height={346} />
          <Svg w={8} h={5}>
            <path d="M0 0h8L4 5z" fill="#6b6b78" />
          </Svg>
        </ScrollTrack>
      </Scrolled>
    </Side>
  );
}

function SectionNodes({ nodes, lead }) {
  return nodes.map((n, i) => {
    const last = i === nodes.length - 1;
    const leaf = !n.items;
    return (
      <React.Fragment key={n.name}>
        <SectionRow $active={n.active}>
          {lead.map((kind, k) => (
            <Guide key={k} $kind={kind} />
          ))}
          {leaf ? (
            <>
              <Guide $kind={last ? "end" : "tee"} />
              <LeafGap />
            </>
          ) : (
            <Toggle aria-label="折叠" />
          )}
          <PageIcon />
          <span>{n.name}</span>
        </SectionRow>
        {n.items && <SectionNodes nodes={n.items} lead={[...lead, last ? "none" : "line"]} />}
      </React.Fragment>
    );
  });
}

function SectionTree() {
  return (
    <Sections>
      <SectionsHeader>
        <CollapseButton aria-label="收起">
          <Svg w={9} h={9}>
            <path d="M4 1L1 4.500 4 8M8 1L5 4.500 8 8" stroke="#777" />
          </Svg>
        </CollapseButton>
      </SectionsHeader>
      <Tree>
        <SectionRow>
          <Toggle $root aria-label="折叠" />
          <RootIcon />
          <span>整个项目</span>
        </SectionRow>
        <SectionNodes nodes={sections} lead={["none"]} />
      </Tree>
    </Sections>
  );
}

function MainTable() {
  return (
    <Grid>
      <Cols widths={mainCols} />
      <thead>
        <tr>
          {mainHeads.map((h, i) => (
            <HeadCell key={i} $height={24} $active={i === 1}>
              {h}
            </HeadCell>
          ))}
        </tr>
      </thead>
      <tbody>
        <Row $bg="#c4c4c4" $bold>
          <NumCell $bold>B2</NumCell>
          <Cell $flush>
            <CodeTree $height={22}>
              <Svg w={18} h={22}>
                <path d="M9 17v5" stroke="#fcc673" />
                <path d="M3.500 5.500h11v11h-11z" fill="white" stroke="#777" />
                <path d="M6 11h6" stroke="#222" />
              </Svg>
            </CodeTree>
          </Cell>
          <Cell />
          <Cell>门窗工程</Cell>
          {[4, 5, 6, 7, 8, 9, 10].map((c) => (
            <Cell key={c} />
          ))}
          <Cell $align="right">210430.21</Cell>
          <Cell>[装饰工程]</Cell>
          <Cell />
          <Cell />
        </Row>
        <Row $bg="#deeaff" $height={61}>
          <NumCell>1</NumCell>
          <Cell $flush>
            <CodeTree $height={60}>
              <Svg w={30} h={60}>
                <path d="M9 0v60M9 30h4M19 36v24" stroke="#fcc673" />
                <path d="M13.500 24.500h11v11h-11z" fill="white" stroke="#777" />
                <path d="M16 30h6" stroke="#222" />
              </Svg>
              <span>010802003057</span>
            </CodeTree>
          </Cell>
          <Cell $align="center">项</Cell>
          <Cell>钢质防火门</Cell>
          <Cell $fullWidth>{feature}</Cell>
          <Cell>m2</Cell>
          <Cell />
          <Cell $align="right">7.59</Cell>
          <Cell />
          <Cell />
          <Cell $align="right">19188.7</Cell>
          <Cell $align="right">145642.23</Cell>
          <Cell>[装饰工程]</Cell>
          <Cell />
          <Cell />
        </Row>
        <Row $height={61}>
          <NumCell />
          <Cell $flush>
            <CodeTree $height={60}>
              <Svg w={40} h={60}>
                <path d="M9 0v60M19 0v60M19 30h16" stroke="#fcc673" />
              </Svg>
              <span>4-12</span>
            </CodeTree>
          </Cell>
          <Cell $align="center">定</Cell>
          <Cell>金属门 钢质防火门</Cell>
          <Cell />
          <Cell>100m2</Cell>
          <Cell $align="center">0.01</Cell>
          <Cell $align="right">0.0759</Cell>
          <Cell $align="right">39295.34</Cell>
          <Cell $align="right">2982.52</Cell>
          <Cell $align="right">40141.63</Cell>
          <Cell $align="right">3046.75</Cell>
          <Cell>装饰工程</Cell>
          <Cell>装饰工程</Cell>
          <Cell $wrap>河北省建设工程消耗量标准(2022)-装饰装修工程</Cell>
        </Row>
        {prices.map((p, i) => (
          <Row key={i} $bg={i === 16 ? "#b5d6ff" : "white"} $frame={i === 16 && "#0066ff"}>
            <NumCell />
            {[1, 2, 3, 4, 5, 6, 7].map((c) => (
              <Cell key={c} />
            ))}
            {p.map((v, k) => (
              <Cell key={k} $align="right">
                {v}
              </Cell>
            ))}
            <Cell>装饰工程</Cell>
            <Cell>装饰工程</Cell>
            <Cell />
          </Row>
        ))}
      </tbody>
    </Grid>
  );
}

function Flag({ value, label }) {
  if (!value) return null;
  return <CheckBox aria-label={label} disabled={value === "off"} />;
}

function ResourceTable() {
  return (
    <Grid>
      <Cols widths={lowerCols} />
      <thead>
        <tr>
          {lowerHeads.map((h, i) => (
            <HeadCell key={i} $active={i === 3}>
              {h}
            </HeadCell>
          ))}
        </tr>
      </thead>
      <tbody>
        {resources.map((r, i) => {
          const on = i === 1;
          return (
            <Row key={r[0]} $bg={on ? "#b5d6ff" : "white"} $frame={on && "#808080"}>
              <NumCell $active={on} $bold={on}>
                {i + 1}
              </NumCell>
              <Cell>{r[0]}</Cell>
              <Cell $align="center">{r[1]}</Cell>
              <Cell $flush={on}>
                {on ? (
                  <EditCell>
                    <span>{r[2]}</span>
                    <span>⋯</span>
                  </EditCell>
                ) : (
                  r[2]
                )}
              </Cell>
              <Cell>{r[3]}</Cell>
              <Cell $align="center">{r[4]}</Cell>
              <Cell />
              {r.slice(5, 12).map((v, k) => (
                <Cell key={k} $align="right" $strong={on && k === 3}>
                  {v}
                </Cell>
              ))}
              <Cell $flush>
                <Flag value={r[12]} label="是否暂估" />
              </Cell>
              <Cell $flush>
                <Flag value={r[13]} label="锁定数量" />
              </Cell>
              <Cell $align="right" $bg={on ? null : "#fffbf6"}>
                {r[14]}
              </Cell>
            </Row>
          );
        })}
      </tbody>
    </Grid>
  );
}

function ChapterArrow({ state }) {
  return (
    <Svg w={6} h={8}>
      {state === "closed" && <path d="M1 0l4 4-4 4z" fill="#777" />}
      {state === "open" && <path d="M6 1v6H0z" fill="#666" />}
    </Svg>
  );
}

function QueryDialog() {
  return (
    <Dialog role="dialog" aria-label="查询">
      <DialogTitle>
        查询
        <div>
          <IconButton aria-label="最大化">
            <Svg w={10} h={10}>
              <path d="M1 1.500h8v7H1z" stroke="white" strokeWidth="2" />
            </Svg>
          </IconButton>
          <IconButton aria-label="关闭">
            <Svg w={10} h={10}>
              <path d="M1 1l8 8M9 1L1 9" stroke="white" strokeWidth="2" />
            </Svg>
          </IconButton>
        </div>
      </DialogTitle>
      <DialogBar>
        {["清单指引", "清单", "定额", "人材机"].map((t, i) => (
          <DialogTab key={t} $active={i === 2}>
            {t}
          </DialogTab>
        ))}
        <DialogButtons>
          <PushButton>插入(I)</PushButton>
          <PushButton>替换(R)</PushButton>
        </DialogButtons>
      </DialogBar>
      <DialogBody>
        <Picker>
          <SelectWrap>
            <select aria-label="定额库">
              <option>河北省建设工程消耗量标准(2022)-装饰装修工程</option>
            </select>
            <Caret w={5} />
          </SelectWrap>
          <PickerSearch aria-label="搜索" placeholder="搜索" />
          <Tree>
            {chapters.map(([level, text, state], i) => (
              <ChapterRow key={text} $level={level} $active={i === 7}>
                <ChapterArrow state={state} />
                {text}
              </ChapterRow>
            ))}
          </Tree>
        </Picker>
        <Results>
          <Grid>
            <Cols widths={quotaCols} />
            <thead>
              <tr>
                {["", "编码", "名称", "单位", "单价"].map((h, i) => (
                  <HeadCell key={i} $active={i === 2} $thin>
                    {h}
                  </HeadCell>
                ))}
              </tr>
            </thead>
            <tbody>
              {quotas.map((q, i) => (
                <Row key={q[0]}>
                  <NumCell $active={i === 0} $bold={i === 0}>
                    {i + 1}
                  </NumCell>
                  <Cell>{q[0]}</Cell>
                  <Cell $flush={i === 0}>
                    {i === 0 ? <PickedCell>{q[1]}</PickedCell> : q[1]}
                  </Cell>
                  <Cell $align="center">{q[2]}</Cell>
                  <Cell $align="right">{q[3]}</Cell>
                </Row>
              ))}
            </tbody>
          </Grid>
          <Splitter>
            <button aria-label="展开">
              <Svg w={6} h={3}>
                <path d="M0 3h6L3 0z" fill="white" />
              </Svg>
            </button>
          </Splitter>
        </Results>
      </DialogBody>
      <Arrows width="520" height="150" fill="none">
        <defs>
          <linearGradient id="fade">
            <stop offset="0" stopColor="#ff5060" stopOpacity=".5" />
            <stop offset=".5" stopColor="#ff5060" />
          </linearGradient>
        </defs>
        <path d="M401 32l1-1 92 54 0-4 7 12-14-2 3-2z" fill="url(#fade)" />
        <path d="M339 100l0-1 106 22-1-4 14 9-16 3 1-4z" fill="url(#fade)" />
      </Arrows>
      <Grip width="10" height="10">
        <path d="M7 1h2M4 5h2M7 5h2M1 9h2M4 9h2M7 9h2" stroke="#a8a8a8" strokeWidth="2" />
      </Grip>
    </Dialog>
  );
}

function Status() {
  return (
    <StatusBar>
      <StatusText>工程量清单项目计量规范(2013-河北)</StatusText>
      <StatusText>河北省建设工程消耗量标准(2022)-装饰装修工程(一般计税)</StatusText>
      <StatusText>装饰装修工程</StatusText>
      <Totals>
        <span>工程造价:978363</span>
        <span>人工费:298136</span>
        <span>材料费:423890</span>
        <span>机械费:62114</span>
        <span>设备费:0</span>
        <span>主材费:11296</span>
      </Totals>
      <ViewButton aria-label="分栏">
        <Svg w={14} h={12}>
          <rect x=".5" y=".5" width="13" height="11" rx="1" stroke="#777" />
          <path d="M0 6h14" stroke={BLUE} strokeWidth="4" />
        </Svg>
      </ViewButton>
      <Divider />
      <ViewButton aria-label="上下布局">
        <Svg w={12} h={13}>
          <path d="M0 0h12v8H0zM0 9h12v4H0z" fill={BLUE} />
        </Svg>
      </ViewButton>
      <IconButton aria-label="左右布局" $left={10}>
        <Svg w={12} h={12}>
          <path d="M0 0h7v12H0zM8 0h4v12H8z" fill="#8a8a8a" />
        </Svg>
      </IconButton>
      <ZoomText>100%</ZoomText>
      <IconButton aria-label="缩小">
        <Svg w={12} h={12}>
          <path d="M0 6h12" stroke="#555" strokeWidth="2" />
        </Svg>
      </IconButton>
      <Slider aria-label="缩放" min="0" max="100" defaultValue="34" />
      <IconButton aria-label="放大">
        <Svg w={12} h={12}>
          <path d="M0 6h12M6 0v12" stroke="#555" strokeWidth="2" />
        </Svg>
      </IconButton>
    </StatusBar>
  );
}

function App() {
  return (
    <Desktop lang="zh-CN">
      <GlobalStyle />
      <Window>
        <Header />
        <Ribbon>
          {ribbon.map(([icon, label, gap, sub, caret]) => (
            <RibbonButton key={label} $gap={gap}>
              <Svg w={24}>{ribbonIcons[icon]}</Svg>
              <span>{label}</span>
              <RibbonSub>
                {sub}
                {caret && <Caret w={5} />}
              </RibbonSub>
            </RibbonButton>
          ))}
        </Ribbon>
        <Work>
          <ProjectTree />
          <Main>
            <TabBar>
              {tabs.map((t, i) => (
                <Tab key={t} $active={i === 3}>
                  {t}
                </Tab>
              ))}
              <TabTools>
                <Svg w={14} h={13}>
                  <path d="M3 1v11M1 3l2-2 2 2M1 10l2 2 2-2" stroke="#777" />
                  <rect x="8" width="5" height="13" rx="1" fill="#888" />
                </Svg>
                <Arrow />
                <Arrow turn={180} />
                <Arrow turn={270} color="#d0d0d0" />
                <Arrow turn={90} color="#d0d0d0" />
                <IconButton aria-label="列设置" $gap={4} $left={8}>
                  <Svg w={16} h={15}>
                    <path d="M1 0v15M5 0v4M9 0v3M13 0v4" stroke={BLUE} strokeWidth="2" />
                    <circle cx="9.500" cy="9.500" r="3.500" stroke={ORANGE} strokeWidth="3" />
                  </Svg>
                  <Caret w={5} />
                </IconButton>
              </TabTools>
            </TabBar>
            <Body>
              <SectionTree />
              <Panes>
                <UpperPane>
                  <div>
                    <MainTable />
                    <NextRow />
                    <Blank />
                  </div>
                  <ScrollTrack $width={14}>
                    <Svg w={8} h={5}>
                      <path d="M0 5h8L4 0z" fill="#6b6b78" />
                    </Svg>
                    <Thumb $top={5} $height={298} />
                    <Svg w={8} h={5}>
                      <path d="M0 0h8L4 5z" fill="#6b6b78" />
                    </Svg>
                  </ScrollTrack>
                </UpperPane>
                <LowerPane>
                  <LowerTabs>
                    {lowerTabs.map((t, i) => (
                      <LowerTab key={t} $active={i === 0}>
                        {t}
                      </LowerTab>
                    ))}
                  </LowerTabs>
                  <ResourceTable />
                </LowerPane>
              </Panes>
            </Body>
          </Main>
        </Work>
        <Status />
      </Window>
      <Strip />
      <QueryDialog />
    </Desktop>
  );
}

export default App;
